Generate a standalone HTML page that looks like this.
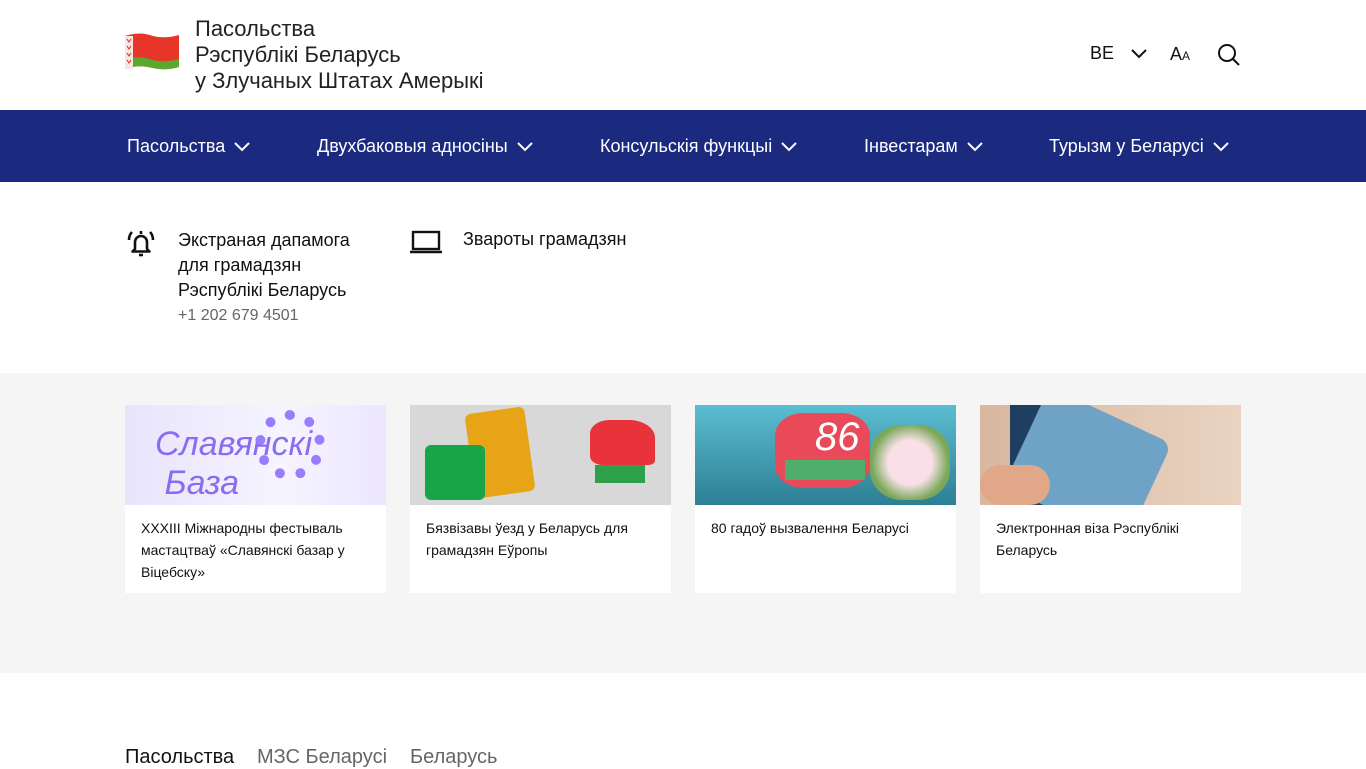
<!DOCTYPE html>
<html><head><meta charset="utf-8"><style>
*{margin:0;padding:0;box-sizing:border-box}
body{width:1366px;height:768px;overflow:hidden;font-family:"Liberation Sans",sans-serif;background:#fff;color:#111}
.hdr{position:relative;height:110px}
.title{position:absolute;left:195px;top:16px;font-size:22px;line-height:26px;color:#222}
.tools{position:absolute;top:43px;left:1090px;font-size:18px;color:#111}
.nav{position:absolute;top:110px;left:0;width:1366px;height:72px;background:#1b2a7f}
.nav span{position:absolute;top:26px;color:#fff;font-size:18px;white-space:nowrap}
.nav svg{position:absolute;top:32px}
.sec2{position:absolute;top:182px;height:191px;width:1366px}
.gray{position:absolute;top:373px;height:300px;width:1366px;background:#f5f5f5}
.card{position:absolute;top:32px;width:261px;height:188px;background:#fff}
.card .img{height:100px;overflow:hidden;position:relative}
.card p{padding:12px 16px;font-size:14px;line-height:22px;color:#111}
.foot{position:absolute;top:746px;left:125px;font-size:20px;color:#666;white-space:nowrap}
.foot span{position:absolute;top:0}
</style></head><body>
<div class="hdr">
<svg style="position:absolute;left:125px;top:31px" width="54" height="45" viewBox="0 0 54 45">
<path d="M0 5 Q14 0 28 5 Q40 8 54 4 L54 36 Q40 40 28 37 Q14 33 0 38Z" fill="#e8352a"/>
<path d="M0 28 Q14 24 28 29 Q40 32 54 28 L54 36 Q40 40 28 37 Q14 33 0 38Z" fill="#5aa82e"/>
<rect x="0" y="5" width="8" height="33" fill="#f5e6e0"/>
<path d="M2 8 l2 3 l2 -3 M2 15 l2 3 l2 -3 M2 22 l2 3 l2 -3 M2 29 l2 3 l2 -3" stroke="#d03020" fill="none"/>
</svg>
<div class="title">Пасольства<br>Рэспублікі Беларусь<br>у Злучаных Штатах Амерыкі</div>
<div class="tools">BE</div>
<svg style="position:absolute;left:1131px;top:49px" width="16" height="10"><path d="M1 1l7 7 7-7" stroke="#111" stroke-width="2" fill="none"/></svg>
<div style="position:absolute;left:1170px;top:44px;font-size:18px">A<span style="font-size:12px">A</span></div>
<svg style="position:absolute;left:1217px;top:43px" width="24" height="24"><circle cx="10" cy="10" r="8" stroke="#111" stroke-width="2" fill="none"/><path d="M16 16l6 6" stroke="#111" stroke-width="2"/></svg>
</div>
<div class="nav">
<span style="left:127px">Пасольства</span><svg style="left:234px" width="16" height="10"><path d="M1 1l7 7 7-7" stroke="#fff" stroke-width="2" fill="none"/></svg>
<span style="left:317px">Двухбаковыя адносіны</span><svg style="left:517px" width="16" height="10"><path d="M1 1l7 7 7-7" stroke="#fff" stroke-width="2" fill="none"/></svg>
<span style="left:600px">Консульскія функцыі</span><svg style="left:781px" width="16" height="10"><path d="M1 1l7 7 7-7" stroke="#fff" stroke-width="2" fill="none"/></svg>
<span style="left:864px">Інвестарам</span><svg style="left:967px" width="16" height="10"><path d="M1 1l7 7 7-7" stroke="#fff" stroke-width="2" fill="none"/></svg>
<span style="left:1049px">Турызм у Беларусі</span><svg style="left:1213px" width="16" height="10"><path d="M1 1l7 7 7-7" stroke="#fff" stroke-width="2" fill="none"/></svg>
</div>
<div class="sec2">
<svg style="position:absolute;left:127px;top:47px" width="28" height="28" viewBox="0 0 28 28"><path d="M8 20V13a6 6 0 0 1 12 0v7l2.5 2.5H5.5z" stroke="#111" stroke-width="2.6" fill="none" stroke-linejoin="round"/><path d="M12 26h4" stroke="#111" stroke-width="2.6"/><path d="M5 3Q2 6 2 11M23 3q3 3 3 8M14 2v3" stroke="#111" stroke-width="2.6" fill="none"/></svg>
<div style="position:absolute;left:178px;top:46px;font-size:18px;line-height:25px">Экстраная дапамога<br>для грамадзян<br>Рэспублікі Беларусь</div>
<div style="position:absolute;left:178px;top:125px;font-size:16px;color:#666">+1 202 679 4501</div>
<svg style="position:absolute;left:409px;top:48px" width="34" height="24"><rect x="4" y="2" width="26" height="17" stroke="#111" stroke-width="2.4" fill="none"/><path d="M1 22h32" stroke="#111" stroke-width="2.4"/></svg>
<div style="position:absolute;left:463px;top:47px;font-size:18px">Звароты грамадзян</div>
</div>
<div class="gray">
<div class="card" style="left:125px"><div class="img" style="background:linear-gradient(90deg,#e8e4fb,#f6f4ff 60%,#ece6ff)"><div style="position:absolute;left:30px;top:20px;font-size:34px;color:#8a6cf0;font-style:italic">Славянскі<br>&nbsp;База</div><div style="position:absolute;left:130px;top:5px;width:70px;height:70px;border-radius:50%;border:10px dotted #9a7cff"></div></div><p>XXXIII Міжнародны фестываль мастацтваў «Славянскі базар у Віцебску»</p></div>
<div class="card" style="left:410px"><div class="img" style="background:#d8d8d8"><div style="position:absolute;left:60px;top:5px;width:60px;height:85px;background:#e8a417;border-radius:6px;transform:rotate(-8deg)"></div><div style="position:absolute;left:15px;top:40px;width:60px;height:55px;background:#18a54a;border-radius:6px"></div><div style="position:absolute;left:180px;top:15px;width:65px;height:45px;background:#e8333a;border-radius:30% 40% 10% 20%"></div><div style="position:absolute;left:185px;top:60px;width:50px;height:18px;background:#2ea04a"></div></div><p>Бязвізавы ўезд у Беларусь для грамадзян Еўропы</p></div>
<div class="card" style="left:695px"><div class="img" style="background:linear-gradient(180deg,#5bbdd1,#2d7f94)"><div style="position:absolute;left:80px;top:8px;width:95px;height:75px;background:#e84a5a;border-radius:30%"></div><div style="position:absolute;left:90px;top:55px;width:80px;height:20px;background:#4fae6a"></div><div style="position:absolute;left:120px;top:10px;font-size:40px;color:#fff;font-style:italic">86</div><div style="position:absolute;left:175px;top:20px;width:80px;height:75px;background:radial-gradient(circle,#f9e0e8 40%,#7aa858 70%);border-radius:40%"></div></div><p>80 гадоў вызвалення Беларусі</p></div>
<div class="card" style="left:980px"><div class="img" style="background:linear-gradient(90deg,#d9b7a0,#e9d3c2)"><div style="position:absolute;left:30px;top:0;width:70px;height:100px;background:#1f3f60"></div><div style="position:absolute;left:40px;top:5px;width:135px;height:110px;background:#6fa3c6;border-radius:12px;transform:rotate(25deg)"></div><div style="position:absolute;left:0;top:60px;width:70px;height:40px;background:#e0a888;border-radius:20px"></div></div><p>Электронная віза Рэспублікі Беларусь</p></div>
</div>
<div class="foot"><span style="left:0;color:#111">Пасольства</span><span style="left:132px">МЗС Беларусі</span><span style="left:285px">Беларусь</span></div>
</body></html>
